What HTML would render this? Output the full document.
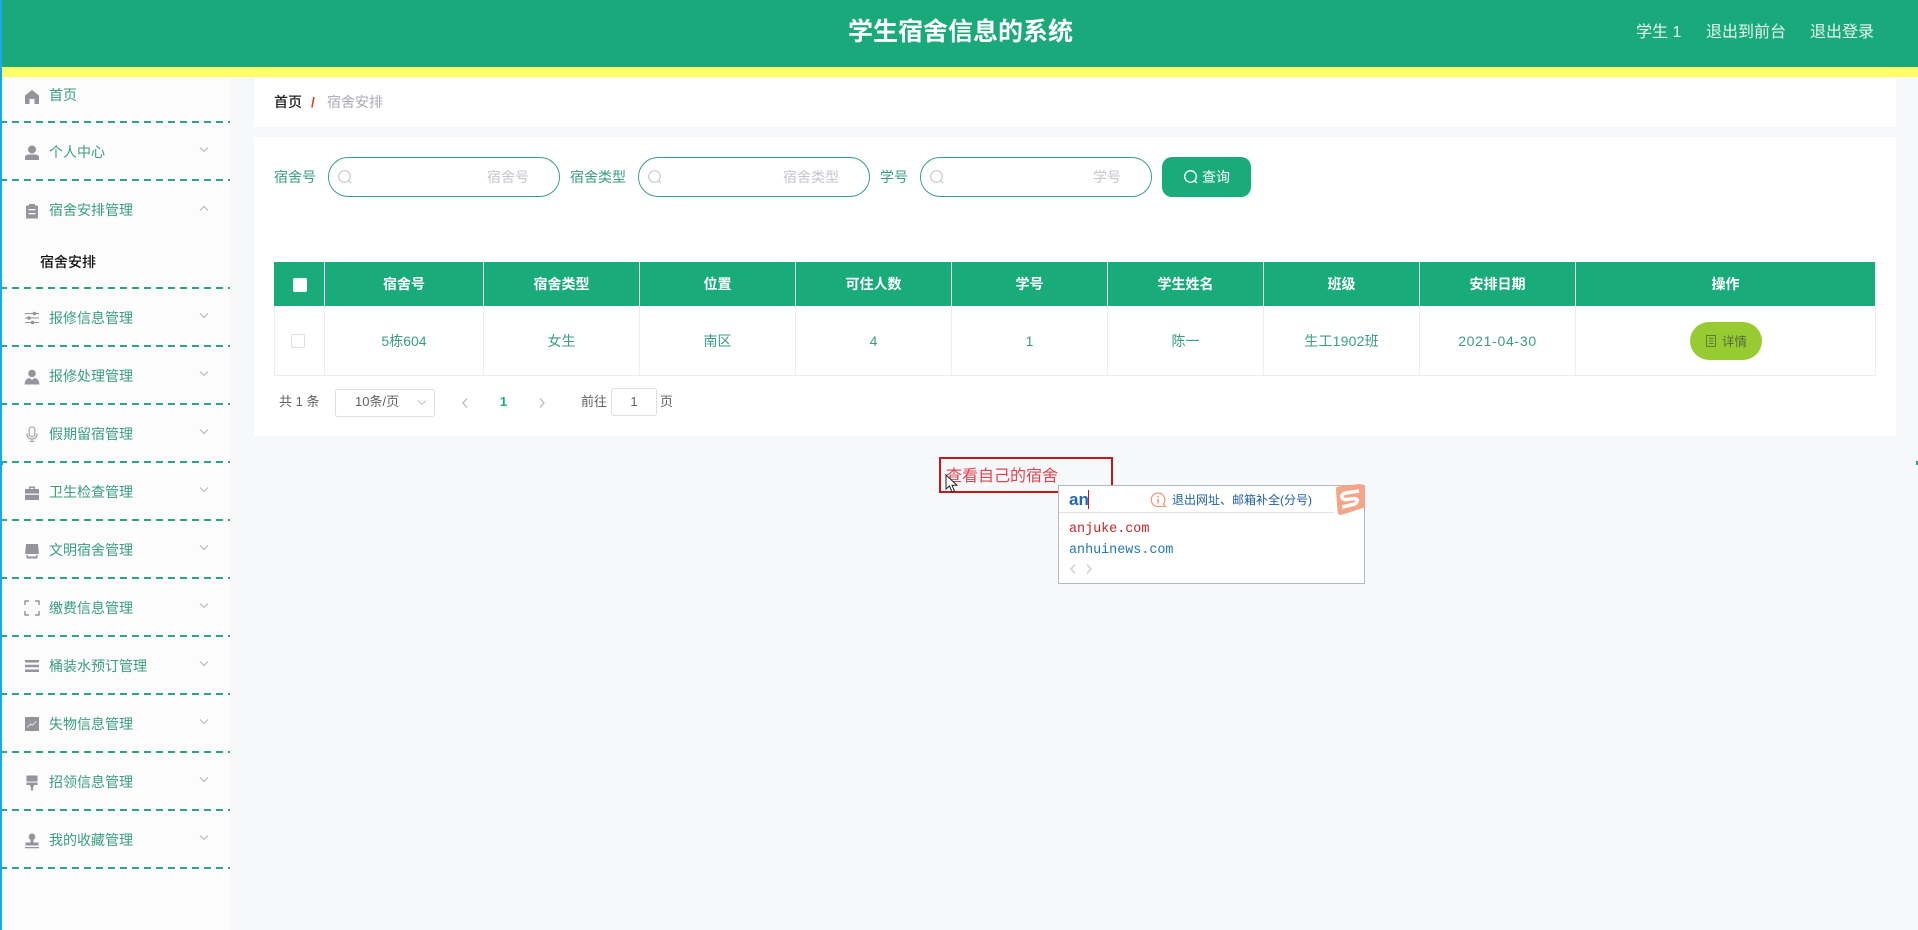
<!DOCTYPE html>
<html lang="zh">
<head>
<meta charset="utf-8">
<title>学生宿舍信息的系统</title>
<style>
html,body{margin:0;padding:0;width:1918px;height:930px;overflow:hidden;background:#f7f8fa;font-family:"Liberation Sans","Noto Sans CJK SC",sans-serif;}
div,span,svg{position:absolute;box-sizing:border-box;}
.t{white-space:nowrap;line-height:20px;height:20px;font-size:14px;}
.c{text-align:center;}
.nav{color:#3a9d80;left:49px;}
.dash{left:0;width:230px;height:2px;background:repeating-linear-gradient(90deg,#2fa386 0 7px,transparent 7px 12px);}
.ic{left:24px;width:16px;height:16px;fill:#95949c;}
.ch{left:197px;width:14px;height:8px;fill:none;stroke:#b4b4ba;stroke-width:1;}
.inp{top:157px;height:40px;border:1px solid #3a9d80;border-radius:20px;background:#fff;}
.lab{top:167px;color:#3a9d80;font-size:14px;}
.ph{top:167px;color:#c4c6cc;font-size:14px;}
.sr{top:169px;width:16px;height:16px;fill:none;stroke:#c8cad0;stroke-width:1.2;}
.th{top:262px;height:44px;background:#1aab7a;color:#fff;font-weight:bold;font-size:14px;line-height:45px;text-align:center;border-right:1px solid #e8f5f0;}
.td{top:306px;height:70px;background:#fff;color:#3a9d80;font-size:14px;line-height:71px;text-align:center;border-right:1px solid #ebeef5;border-bottom:1px solid #ebeef5;}
.pg{color:#606266;font-size:13px;}
</style>
</head>
<body>
<div style="left:0;top:0;width:1918px;height:67px;background:#1aa97a;"></div>
<div style="left:0;top:67px;width:1918px;height:10px;background:#ffff66;"></div>
<div class="t" style="left:848px;top:17px;height:30px;line-height:30px;font-size:25px;font-weight:bold;color:#fff;">学生宿舍信息的系统</div>
<div class="t" style="left:1636px;top:23px;font-size:16px;color:#e6f7f0;">学生 1</div>
<div class="t" style="left:1706px;top:23px;font-size:16px;color:#e6f7f0;">退出到前台</div>
<div class="t" style="left:1810px;top:23px;font-size:16px;color:#e6f7f0;">退出登录</div>

<!-- sidebar -->
<div style="left:0;top:77px;width:230px;height:853px;background:#fcfcfd;"></div>
<div class="dash" style="top:121px"></div>
<div class="dash" style="top:179px"></div>
<div class="dash" style="top:287px"></div>
<div class="dash" style="top:345px"></div>
<div class="dash" style="top:403px"></div>
<div class="dash" style="top:461px"></div>
<div class="dash" style="top:519px"></div>
<div class="dash" style="top:577px"></div>
<div class="dash" style="top:635px"></div>
<div class="dash" style="top:693px"></div>
<div class="dash" style="top:751px"></div>
<div class="dash" style="top:809px"></div>
<div class="dash" style="top:867px"></div>

<div class="t nav" style="top:85px">首页</div>
<div class="t nav" style="top:142px">个人中心</div>
<div class="t nav" style="top:200px">宿舍安排管理</div>
<div class="t" style="left:40px;top:252px;color:#111;font-weight:500;">宿舍安排</div>
<div class="t nav" style="top:308px">报修信息管理</div>
<div class="t nav" style="top:366px">报修处理管理</div>
<div class="t nav" style="top:424px">假期留宿管理</div>
<div class="t nav" style="top:482px">卫生检查管理</div>
<div class="t nav" style="top:540px">文明宿舍管理</div>
<div class="t nav" style="top:598px">缴费信息管理</div>
<div class="t nav" style="top:656px">桶装水预订管理</div>
<div class="t nav" style="top:714px">失物信息管理</div>
<div class="t nav" style="top:772px">招领信息管理</div>
<div class="t nav" style="top:830px">我的收藏管理</div>

<!-- sidebar icons -->
<svg class="ic" style="top:89px" viewBox="0 0 16 16"><path d="M8 1 L15 6.500 V15 H10.500 V10 H5.500 V15 H1 V6.500 Z"/></svg>
<svg class="ic" style="top:145px" viewBox="0 0 16 16"><circle cx="8" cy="4.500" r="4"/><path d="M1 15 V12.500 Q1 9.500 4.500 9.500 H11.500 Q15 9.500 15 12.500 V15 Z"/></svg>
<svg class="ic" style="top:202px;height:18px" viewBox="0 0 16 16"><path fill-rule="evenodd" d="M2 2.500 H5 V1 H11 V2.500 H14 V15.500 H2 Z M4.500 6 V7.200 H11.500 V6 Z M4.500 10 V11.200 H11.500 V10 Z"/></svg>
<svg class="ic" style="top:310px" viewBox="0 0 16 16"><path d="M1 3 H15 V4 H1 Z M1 7.500 H15 V8.500 H1 Z M1 12 H15 V13 H1 Z"/><circle cx="10.500" cy="3.500" r="1.800"/><circle cx="5" cy="8" r="1.800"/><circle cx="8.500" cy="12.500" r="1.800"/></svg>
<svg class="ic" style="top:369px" viewBox="0 0 16 16"><circle cx="8" cy="4.500" r="3.800"/><path d="M0.500 15.500 Q1 9.500 5.500 9 L8 11 L10.500 9 Q15 9.500 15.500 15.500 Z"/></svg>
<svg class="ic" style="top:426px;fill:none;stroke:#a5a4ab;stroke-width:1.200" viewBox="0 0 16 16"><rect x="5.200" y="0.800" width="5.600" height="10" rx="2.800"/><path d="M3 7.500 Q3 13 8 13 Q13 13 13 7.500 M8 13 V15.500 M5.500 15.500 H10.500"/></svg>
<svg class="ic" style="top:485px" viewBox="0 0 16 16"><path fill-rule="evenodd" d="M5 4 V1.500 H11 V4 H15 V8.500 H1 V4 Z M6.500 3 V4 H9.500 V3 Z M1 9.700 H15 V15 H1 Z"/></svg>
<svg class="ic" style="top:543px" viewBox="0 0 16 16"><path d="M2 1 H14 L15 11 H1 Z M2.500 12 H4 V13.500 H12 V12 H13.500 V15.500 H2.500 Z"/></svg>
<svg class="ic" style="top:600px;fill:none;stroke:#95949c;stroke-width:1.400" viewBox="0 0 16 16"><path d="M1 5 V1 H5 M11 1 H15 V5 M1 11 V15 H5 M11 15 H15 V11"/></svg>
<svg class="ic" style="top:658px" viewBox="0 0 16 16"><path d="M1 2 H15 V4.500 H1 Z M1 6.800 H15 V9.200 H1 Z M1 11.500 H15 V14 H1 Z"/></svg>
<svg class="ic" style="top:716px" viewBox="0 0 16 16"><path fill-rule="evenodd" d="M1 1 H15 V15 H1 Z M3.500 11.500 L6.500 8.500 L8.500 9.800 L12.500 5.500 L12 5 L8.500 8.800 L6.500 7.500 L3 11 Z"/></svg>
<svg class="ic" style="top:775px" viewBox="0 0 16 16"><path d="M2.500 0.500 H13.500 V6.500 H2.500 Z M2.500 7.500 H13.500 V10 H10 V11.500 H9 V15.500 H7 V11.500 H6 V10 H2.500 Z"/></svg>
<svg class="ic" style="top:833px" viewBox="0 0 16 16"><circle cx="8" cy="3.800" r="3.300"/><path d="M6.500 7 H9.500 V9.500 H14.500 V12.500 H1.500 V9.500 H6.500 Z M1 14 H15 V15.300 H1 Z"/></svg>

<!-- chevrons -->
<svg class="ch" style="top:146px" viewBox="0 0 14 8"><path d="M3 1.500 L7 5.500 L11 1.500"/></svg>
<svg class="ch" style="top:205px" viewBox="0 0 14 8"><path d="M3 5.500 L7 1.500 L11 5.500"/></svg>
<svg class="ch" style="top:312px" viewBox="0 0 14 8"><path d="M3 1.500 L7 5.500 L11 1.500"/></svg>
<svg class="ch" style="top:370px" viewBox="0 0 14 8"><path d="M3 1.500 L7 5.500 L11 1.500"/></svg>
<svg class="ch" style="top:428px" viewBox="0 0 14 8"><path d="M3 1.500 L7 5.500 L11 1.500"/></svg>
<svg class="ch" style="top:486px" viewBox="0 0 14 8"><path d="M3 1.500 L7 5.500 L11 1.500"/></svg>
<svg class="ch" style="top:544px" viewBox="0 0 14 8"><path d="M3 1.500 L7 5.500 L11 1.500"/></svg>
<svg class="ch" style="top:602px" viewBox="0 0 14 8"><path d="M3 1.500 L7 5.500 L11 1.500"/></svg>
<svg class="ch" style="top:660px" viewBox="0 0 14 8"><path d="M3 1.500 L7 5.500 L11 1.500"/></svg>
<svg class="ch" style="top:718px" viewBox="0 0 14 8"><path d="M3 1.500 L7 5.500 L11 1.500"/></svg>
<svg class="ch" style="top:776px" viewBox="0 0 14 8"><path d="M3 1.500 L7 5.500 L11 1.500"/></svg>
<svg class="ch" style="top:834px" viewBox="0 0 14 8"><path d="M3 1.500 L7 5.500 L11 1.500"/></svg>

<!-- left blue edge -->
<div style="left:0;top:0;width:1.500px;height:930px;background:#19a8e2;"></div>
<div style="left:0;top:461px;width:3px;height:4px;background:#19a8e2;"></div>
<div style="left:1916px;top:461px;width:2px;height:4px;background:#1aab7a;"></div>

<!-- breadcrumb -->
<div style="left:254px;top:77px;width:1642px;height:50px;background:#fff;"></div>
<div class="t" style="left:274px;top:92px;font-size:14px;color:#222;font-weight:500;">首页</div>
<div class="t" style="left:311px;top:92px;font-size:14px;color:#e0401c;font-weight:bold;">/</div>
<div class="t" style="left:327px;top:92px;font-size:14px;color:#a8abb3;">宿舍安排</div>

<!-- main card -->
<div style="left:254px;top:137px;width:1642px;height:299px;background:#fff;"></div>

<div class="t lab" style="left:274px">宿舍号</div>
<div class="inp" style="left:328px;width:232px"></div>
<svg class="sr" style="left:337px" viewBox="0 0 16 16"><circle cx="7.500" cy="7.500" r="5.800"/><path d="M11.800 11.800 L14 14"/></svg>
<div class="t ph" style="left:487px">宿舍号</div>

<div class="t lab" style="left:570px">宿舍类型</div>
<div class="inp" style="left:638px;width:232px"></div>
<svg class="sr" style="left:647px" viewBox="0 0 16 16"><circle cx="7.500" cy="7.500" r="5.800"/><path d="M11.800 11.800 L14 14"/></svg>
<div class="t ph" style="left:783px">宿舍类型</div>

<div class="t lab" style="left:880px">学号</div>
<div class="inp" style="left:920px;width:232px"></div>
<svg class="sr" style="left:929px" viewBox="0 0 16 16"><circle cx="7.500" cy="7.500" r="5.800"/><path d="M11.800 11.800 L14 14"/></svg>
<div class="t ph" style="left:1093px">学号</div>

<div style="left:1162px;top:157px;width:89px;height:40px;background:#1aab7a;border-radius:10px;"></div>
<svg style="left:1183px;top:169px;width:16px;height:16px;fill:none;stroke:#fff;stroke-width:1.300" viewBox="0 0 16 16"><circle cx="7.500" cy="7.500" r="5.800"/><path d="M11.800 11.800 L14 14"/></svg>
<div class="t" style="left:1202px;top:167px;color:#fff;">查询</div>

<!-- table -->
<div class="th" style="left:274px;width:51px"></div>
<div style="left:293px;top:278px;width:14px;height:14px;background:#fff;border-radius:2px;"></div>
<div class="th" style="left:325px;width:159px">宿舍号</div>
<div class="th" style="left:484px;width:156px">宿舍类型</div>
<div class="th" style="left:640px;width:156px">位置</div>
<div class="th" style="left:796px;width:156px">可住人数</div>
<div class="th" style="left:952px;width:156px">学号</div>
<div class="th" style="left:1108px;width:156px">学生姓名</div>
<div class="th" style="left:1264px;width:156px">班级</div>
<div class="th" style="left:1420px;width:156px">安排日期</div>
<div class="th" style="left:1576px;width:299px;border-right:0">操作</div>

<div class="td" style="left:274px;width:51px;border-left:1px solid #ebeef5"></div>
<div style="left:291px;top:334px;width:14px;height:14px;background:#fff;border:1px solid #dcdfe6;border-radius:2px;"></div>
<div class="td" style="left:325px;width:159px">5栋604</div>
<div class="td" style="left:484px;width:156px">女生</div>
<div class="td" style="left:640px;width:156px">南区</div>
<div class="td" style="left:796px;width:156px">4</div>
<div class="td" style="left:952px;width:156px">1</div>
<div class="td" style="left:1108px;width:156px">陈一</div>
<div class="td" style="left:1264px;width:156px"><span style="position:static;letter-spacing:0.200px">生工1902班</span></div>
<div class="td" style="left:1420px;width:156px;letter-spacing:0.700px">2021-04-30</div>
<div class="td" style="left:1576px;width:300px"></div>

<div style="left:1690px;top:322px;width:72px;height:38px;background:#96cc32;border-radius:19px;"></div>
<svg style="left:1705px;top:334px;width:12px;height:14px;fill:none;stroke:#5f7d3a;stroke-width:1" viewBox="0 0 12 14"><path d="M1.500 1.500 H10.500 V12.500 H1.500 Z M4 4.500 H8.500 M4 7 H8.500 M4 9.500 H8.500"/></svg>
<div class="t" style="left:1722px;top:332px;font-size:12.500px;color:#556b35;">详情</div>

<!-- pagination -->
<div class="t pg" style="left:279px;top:392px">共 1 条</div>
<div style="left:335px;top:389px;width:100px;height:28px;border:1px solid #dcdfe6;border-radius:3px;background:#fff;"></div>
<div class="t pg" style="left:355px;top:392px">10条/页</div>
<svg style="left:416px;top:399px;width:12px;height:8px;fill:none;stroke:#c0c4cc;stroke-width:1" viewBox="0 0 12 8"><path d="M2 1.500 L6 5.500 L10 1.500"/></svg>
<svg style="left:461px;top:397px;width:8px;height:12px;fill:none;stroke:#b4b7be;stroke-width:1.300" viewBox="0 0 8 12"><path d="M6 1.500 L2 6 L6 10.500"/></svg>
<div class="t" style="left:499px;top:392px;width:9px;text-align:center;font-size:13px;font-weight:bold;color:#1aab7a;">1</div>
<svg style="left:538px;top:397px;width:8px;height:12px;fill:none;stroke:#b4b7be;stroke-width:1.300" viewBox="0 0 8 12"><path d="M2 1.500 L6 6 L2 10.500"/></svg>
<div class="t pg" style="left:581px;top:392px">前往</div>
<div class="pg c" style="left:611px;top:388px;width:46px;height:28px;line-height:26px;border:1px solid #dcdfe6;border-radius:3px;background:#fff;">1</div>
<div class="t pg" style="left:660px;top:392px">页</div>

<!-- red tooltip box -->
<div style="left:939px;top:457px;width:174px;height:36px;border:2px solid #c8161d;"></div>
<div class="t" style="left:946px;top:466px;height:22px;line-height:22px;font-size:16px;color:#e0434f;">查看自己的宿舍</div>

<!-- cursor -->
<svg style="left:945px;top:474px;width:14px;height:20px;z-index:5" viewBox="0 0 14 20"><path d="M1 1 L1 15 L4.500 12 L7 18 L9.500 17 L7 11.300 L12 11.300 Z" fill="#fff" stroke="#222" stroke-width="1"/></svg>

<!-- IME popup -->
<div style="left:1058px;top:485px;width:307px;height:99px;background:#fff;border:1px solid #b5b8bd;z-index:3;"></div>
<div style="left:1059px;top:512px;width:275px;height:1px;background:#dfe1e4;z-index:4;"></div>
<div class="t" style="left:1069px;top:489px;height:22px;line-height:22px;font-size:17px;font-weight:bold;color:#2467b8;z-index:4;">an</div>
<div style="left:1088px;top:490px;width:1px;height:19px;background:#c8161d;z-index:4;"></div>
<svg style="left:1150px;top:492px;width:17px;height:16px;z-index:4;fill:none;stroke:#ee9a7a;stroke-width:1.200" viewBox="0 0 17 16"><path d="M8 1 A6.700 6.700 0 1 0 8 14.500 H15.500 L13.300 12 A6.700 6.700 0 0 0 8 1 Z"/><path d="M8 4 V5.500 M8 7 V11.500" stroke-width="1.600"/></svg>
<div class="t" style="left:1172px;top:490px;font-size:12px;color:#1f5fa8;z-index:4;">退出网址、邮箱补全(分号)</div>
<svg style="left:1333px;top:484px;width:33px;height:32px;z-index:4" viewBox="0 0 33 32"><path d="M3 5 Q3 3 5 2.500 L27 0 Q31 0 32 4 L32 21 Q32 23 30 24 L8 31 Q5 31 4.500 28 Z" fill="#f4a588"/><path d="M26 7 L13 9 Q8 10 9 13.500 Q10 16 14 15.500 L21 14.500 Q25 14.500 24 17.500 Q23 20 20 20.500 L9 23" fill="none" stroke="#fff" stroke-width="3.500"/></svg>
<div class="t" style="left:1069px;top:520px;font-family:'Liberation Mono',monospace;font-size:13.400px;color:#c0252b;z-index:4;">anjuke.com</div>
<div class="t" style="left:1069px;top:541px;font-family:'Liberation Mono',monospace;font-size:13.400px;color:#2478b4;z-index:4;">anhuinews.com</div>
<svg style="left:1069px;top:563px;width:24px;height:12px;z-index:4;fill:none;stroke:#cfd1d4;stroke-width:1.500" viewBox="0 0 24 12"><path d="M6 1.500 L2 6 L6 10.500 M18 1.500 L22 6 L18 10.500"/></svg>
</body>
</html>
